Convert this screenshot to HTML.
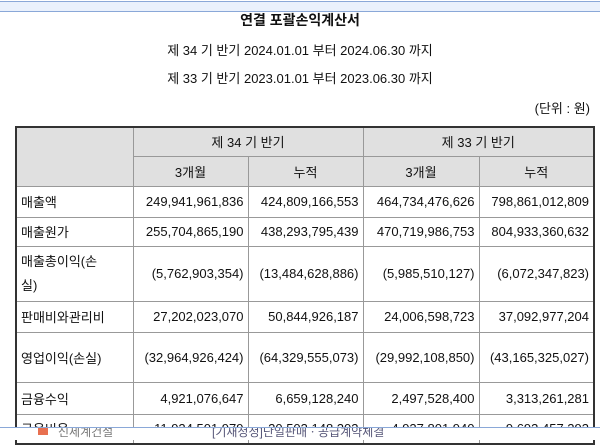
<!DOCTYPE html>
<html><head><meta charset="utf-8"><style>
*{margin:0;padding:0;box-sizing:border-box}
body{width:600px;height:440px;overflow:hidden;background:#fff;font-family:"Liberation Sans","Noto Sans CJK KR",sans-serif;font-size:13px;color:#111;position:relative}
.top{position:absolute;left:0;top:1px;width:600px;height:11px;background:#eaf1fc;border-top:1px solid #8aa8d8;border-bottom:1px solid #8aa8d8}
.t{position:absolute;left:0;width:600px;text-align:center}
table{position:absolute;left:15px;top:126px;border-collapse:collapse;border:2px solid #333;table-layout:fixed}
td{border:1px solid #999;padding:0 4px;white-space:nowrap}
td.n{text-align:right}
tr.h td{background:#e0e0e0;text-align:center}
.bot{position:absolute;left:0;top:427px;width:600px;height:13px;background:#fff;border-top:1px solid #8aa8d8;overflow:hidden;color:#777;font-size:12px}
</style></head><body>
<div class="top"></div>
<div class="t" style="top:10px;font-weight:bold;font-size:14px">연결 포괄손익계산서</div>
<div class="t" style="top:40px">제 34 기 반기 2024.01.01 부터 2024.06.30 까지</div>
<div class="t" style="top:68px">제 33 기 반기 2023.01.01 부터 2023.06.30 까지</div>
<div style="position:absolute;right:10px;top:98px">(단위 : 원)</div>
<table>
<colgroup><col style="width:117px"><col style="width:115px"><col style="width:115px"><col style="width:116px"><col style="width:115px"></colgroup>
<tr class="h" style="height:29px"><td rowspan="2"></td><td colspan="2">제 34 기 반기</td><td colspan="2">제 33 기 반기</td></tr>
<tr class="h" style="height:30px"><td>3개월</td><td>누적</td><td>3개월</td><td>누적</td></tr>
<tr style="height:31px"><td>매출액</td><td class="n">249,941,961,836</td><td class="n">424,809,166,553</td><td class="n">464,734,476,626</td><td class="n">798,861,012,809</td></tr>
<tr style="height:29px"><td>매출원가</td><td class="n">255,704,865,190</td><td class="n">438,293,795,439</td><td class="n">470,719,986,753</td><td class="n">804,933,360,632</td></tr>
<tr style="height:55px"><td style="white-space:normal;line-height:24px">매출총이익(손<br>실)</td><td class="n">(5,762,903,354)</td><td class="n">(13,484,628,886)</td><td class="n">(5,985,510,127)</td><td class="n">(6,072,347,823)</td></tr>
<tr style="height:31px"><td>판매비와관리비</td><td class="n">27,202,023,070</td><td class="n">50,844,926,187</td><td class="n">24,006,598,723</td><td class="n">37,092,977,204</td></tr>
<tr style="height:50px"><td>영업이익(손실)</td><td class="n">(32,964,926,424)</td><td class="n">(64,329,555,073)</td><td class="n">(29,992,108,850)</td><td class="n">(43,165,325,027)</td></tr>
<tr style="height:32px"><td>금융수익</td><td class="n">4,921,076,647</td><td class="n">6,659,128,240</td><td class="n">2,497,528,400</td><td class="n">3,313,261,281</td></tr>
<tr style="height:30px"><td>금융비용</td><td class="n">11,924,501,979</td><td class="n">20,503,148,203</td><td class="n">4,927,801,940</td><td class="n">9,693,457,293</td></tr>
</table>
<div class="bot"><span style="position:absolute;left:38px;top:-3px;width:10px;height:10px;background:#e87050"></span><span style="position:absolute;left:58px;top:-5px">신세계건설</span><span style="position:absolute;left:212px;top:-5px;color:#557">[기재정정]단일판매ㆍ공급계약체결</span></div>
</body></html>
